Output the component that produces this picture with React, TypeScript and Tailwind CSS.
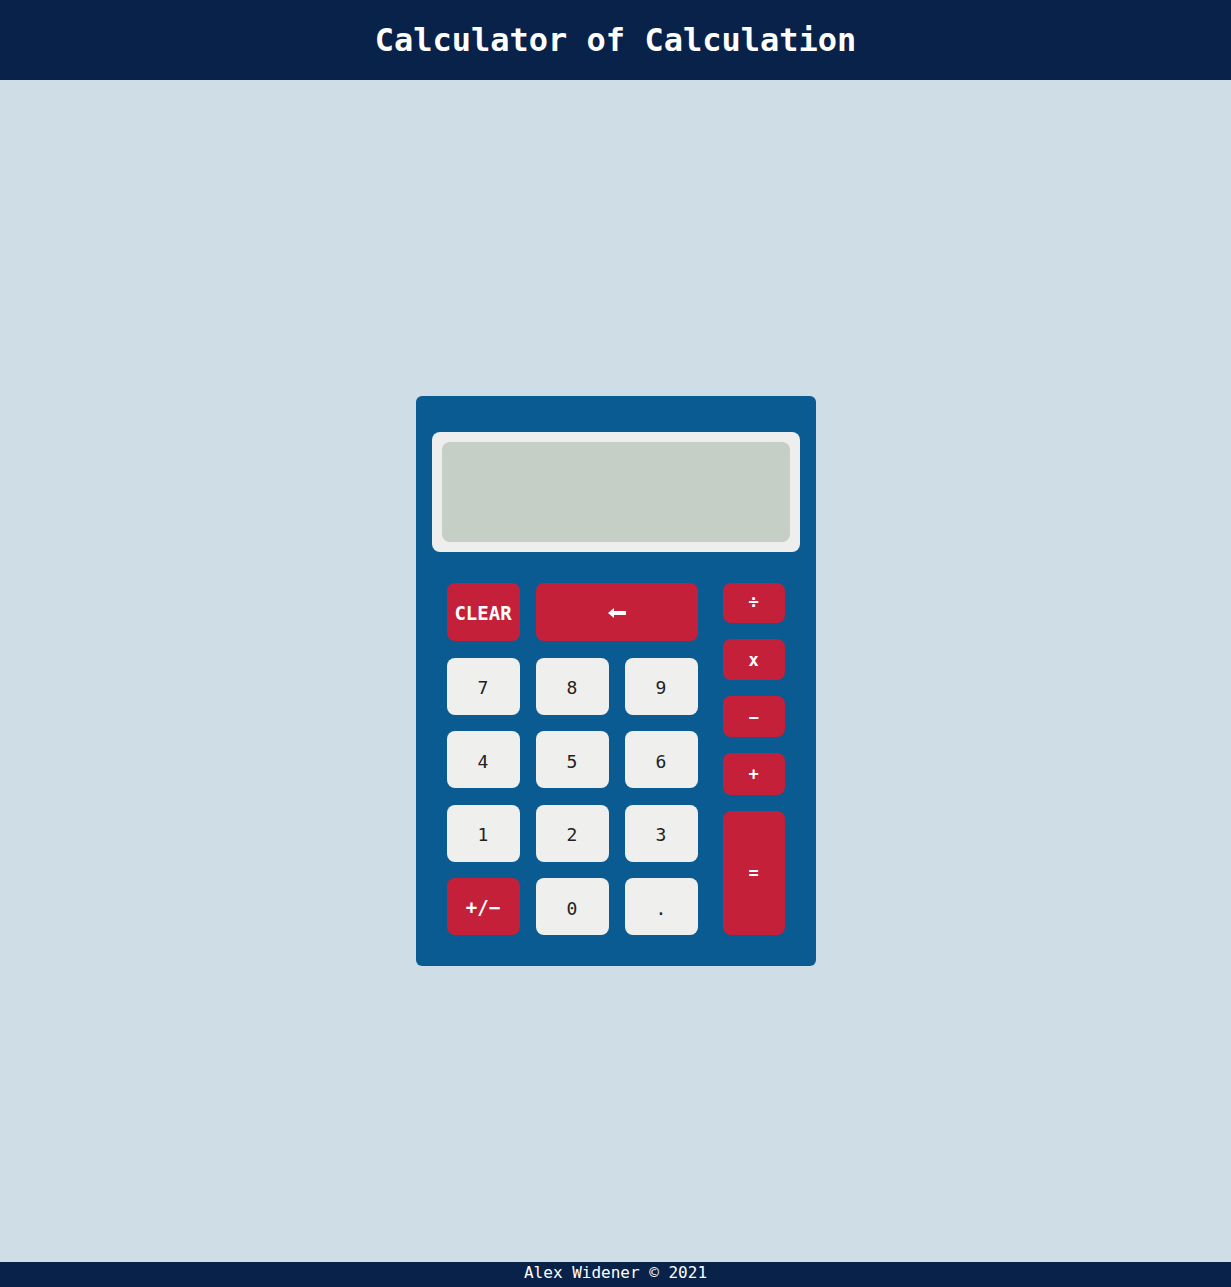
const MONO = "font-['DejaVu_Sans_Mono',monospace]";

const RED = "bg-[#c5203a] text-white font-bold";
const LIGHT = "bg-[#efefed] text-[#222222]";

function Key({
  label,
  className,
}: {
  label: React.ReactNode;
  className: string;
}) {
  return (
    <button
      type="button"
      className={`flex items-center justify-center rounded-[8px] ${className}`}
    >
      {label}
    </button>
  );
}

function BackArrow() {
  return (
    <svg width="18" height="10" viewBox="0 0 18 10" className="mt-[2px]">
      <path d="M0 5 L6 0 L6 3 L18 3 L18 7 L6 7 L6 10 Z" fill="white" />
    </svg>
  );
}

export default function App() {
  const digits = [
    ["7", "8", "9"],
    ["4", "5", "6"],
    ["1", "2", "3"],
  ];

  return (
    <div className={`flex min-h-screen flex-col bg-[#cfdde7] ${MONO}`}>
      <header className="flex h-[80px] items-center justify-center bg-[#08224a]">
        <h1 className="text-[32px] font-bold text-white">
          Calculator of Calculation
        </h1>
      </header>

      <main className="flex flex-1 items-center justify-center pt-[20px]">
        <div className="w-[400px] rounded-[6px] bg-[#0a5b91] px-[16px] pt-[36px] pb-[31px]">
          <div className="rounded-[8px] bg-[#eeeeee] p-[10px]">
            <div className="h-[100px] rounded-[8px] bg-[#c5cfc6]" />
          </div>

          <div className="mt-[31px] flex gap-[25px] px-[15px]">
            <div className="flex w-[251px] flex-col gap-[16.5px]">
              <div className="flex h-[58px] gap-[16px]">
                <Key label="CLEAR" className={`w-[73px] pt-[3px] text-[19px] ${RED}`} />
                <Key label={<BackArrow />} className={`flex-1 ${RED}`} />
              </div>
              {digits.map((row) => (
                <div key={row[0]} className="flex h-[57px] gap-[16px]">
                  {row.map((d) => (
                    <Key key={d} label={d} className={`w-[73px] pt-[3px] text-[18px] ${LIGHT}`} />
                  ))}
                </div>
              ))}
              <div className="flex h-[57px] gap-[16px]">
                <Key label="+/−" className={`w-[73px] pt-[2px] text-[19px] ${RED}`} />
                <Key label="0" className={`w-[73px] pt-[3px] text-[18px] ${LIGHT}`} />
                <Key label="." className={`w-[73px] pt-[3px] text-[18px] ${LIGHT}`} />
              </div>
            </div>

            <div className="flex w-[62px] flex-col gap-[16px]">
              <Key label="÷" className={`h-[40px] text-[17px] ${RED}`} />
              <Key label="x" className={`h-[41px] pt-[2px] text-[17px] ${RED}`} />
              <Key label="−" className={`h-[41px] pt-[2px] text-[17px] ${RED}`} />
              <Key label="+" className={`h-[42px] pt-[2px] text-[17px] ${RED}`} />
              <Key label="=" className={`h-[124px] pt-[2px] text-[17px] ${RED}`} />
            </div>
          </div>
        </div>
      </main>

      <footer className="flex h-[25px] items-center justify-center bg-[#08224a] pb-[3px] text-[16px] text-white">
        Alex Widener © 2021
      </footer>
    </div>
  );
}
